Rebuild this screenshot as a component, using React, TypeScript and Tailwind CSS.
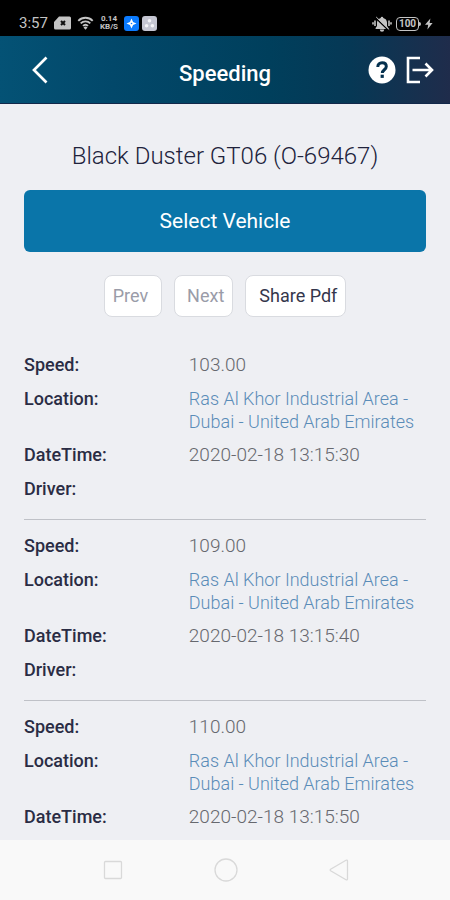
type SpeedingRecord = {
  speed: string;
  location: string;
  dateTime: string;
  driver?: string;
};

const records: SpeedingRecord[] = [
  {
    speed: "103.00",
    location: "Ras Al Khor Industrial Area - Dubai - United Arab Emirates",
    dateTime: "2020-02-18 13:15:30",
    driver: "",
  },
  {
    speed: "109.00",
    location: "Ras Al Khor Industrial Area - Dubai - United Arab Emirates",
    dateTime: "2020-02-18 13:15:40",
    driver: "",
  },
  {
    speed: "110.00",
    location: "Ras Al Khor Industrial Area - Dubai - United Arab Emirates",
    dateTime: "2020-02-18 13:15:50",
  },
];

function StatusBar() {
  return (
    <div className="flex h-9 shrink-0 items-end justify-between bg-black pr-[17px] pb-1 pl-[19px] text-[#c4c4c4]">
      <div className="flex items-center gap-1.5">
        <span className="text-[15px] leading-[18px]">3:57</span>

        <svg width="17" height="14" viewBox="0 0 17 14" aria-hidden="true">
          <path
            d="M5 0.5h10.5a1.5 1.5 0 0 1 1.5 1.5v10a1.5 1.5 0 0 1-1.5 1.5h-14A1.5 1.5 0 0 1 0 12V6z"
            fill="currentColor"
          />
          <path
            d="M7 5l4 4M11 5l-4 4"
            stroke="#111"
            strokeWidth="2"
          />
        </svg>

        <svg width="17" height="14" viewBox="0 0 16 14" fill="none" aria-hidden="true">
          <path
            d="M0.8 4.8a10.2 10.2 0 0 1 14.4 0M3.2 7.4a6.8 6.8 0 0 1 9.6 0M5.5 9.9a3.6 3.6 0 0 1 5 0"
            stroke="currentColor"
            strokeWidth="1.9"
          />
          <path d="M8 13.8l-2-2.4a2.8 2.8 0 0 1 4 0z" fill="currentColor" />
        </svg>

        <div className="flex flex-col items-center text-[8px] leading-2 font-bold">
          <span>0.14</span>
          <span>KB/S</span>
        </div>

        <div className="flex gap-[3px]">
          <svg width="15" height="15" viewBox="0 0 15 15" aria-hidden="true">
            <rect width="15" height="15" rx="3" fill="#0b7bff" />
            <path
              d="M7.5 2.5l1.6 3.4 3.4 1.6-3.4 1.6-1.6 3.4-1.6-3.4-3.4-1.6 3.4-1.6z"
              fill="#fff"
            />
            <circle cx="7.5" cy="7.5" r="0.8" fill="#0b7bff" />
          </svg>
          <svg width="15" height="15" viewBox="0 0 15 15" aria-hidden="true">
            <rect width="15" height="15" rx="3" fill="#c5c6d2" />
            <circle cx="7.5" cy="4.8" r="1.8" fill="#f4f4f8" />
            <circle cx="4.6" cy="9.8" r="1.8" fill="#f4f4f8" />
            <circle cx="10.4" cy="9.8" r="1.8" fill="#f4f4f8" />
          </svg>
        </div>
      </div>

      <div className="flex items-center gap-1">
        <svg width="20" height="16" viewBox="0 0 20 16" aria-hidden="true">
          <path
            d="M10 0.8a1.3 1.3 0 0 1 1.3 1.2A5 5 0 0 1 15 6.5V10l1.4 2v1H3.6v-1L5 10V6.5A5 5 0 0 1 8.7 2 1.3 1.3 0 0 1 10 0.8zM7.8 13.6h4.4a2.2 2.2 0 0 1-4.4 0z"
            fill="currentColor"
          />
          <path
            d="M3 4.6v5.4M1 6.2v2.4M17 4.6v5.4M19 6.2v2.4"
            stroke="currentColor"
            strokeWidth="1.6"
          />
          <path d="M3.4 1.8l13 12.4" stroke="#000" strokeWidth="1.3" />
          <path d="M4.2 1l13 12.6" stroke="currentColor" strokeWidth="1" />
        </svg>

        <div className="flex items-center">
          <span className="flex h-[14px] w-[23px] items-center justify-center rounded-[4px] border border-[#c4c4c4] text-[10px] leading-3 font-bold">
            100
          </span>
          <span className="h-1 w-0.5 rounded-r bg-[#c4c4c4]" />
        </div>

        <svg width="8" height="12" viewBox="0 0 8 12" aria-hidden="true">
          <path d="M5.4 0.5L0 6.8h3.2L2.4 11.5 7.6 5H4.6z" fill="currentColor" />
        </svg>
      </div>
    </div>
  );
}

function Header() {
  return (
    <header className="grid h-[68px] shrink-0 grid-cols-[1fr_auto_1fr] items-center border-b border-[#12284a] bg-[linear-gradient(to_right,#045275,#02486a_25%,#003f5c_60%,#063855_78%,#1f2c4b)] px-4 text-white">
      <button
        type="button"
        aria-label="Back"
        className="flex size-12 items-center justify-center"
      >
        <svg width="16" height="28" viewBox="0 0 16 28" fill="none">
          <path d="M14.5 1.5L2 14l12.5 12.5" stroke="currentColor" strokeWidth="2.7" />
        </svg>
      </button>

      <h1 className="pt-2 text-[22px] leading-7 font-medium">Speeding</h1>

      <div className="flex items-center justify-end gap-2.5">
        <button type="button" aria-label="Help">
          <svg width="28" height="28" viewBox="0 0 28 28" fill="none">
            <circle cx="14" cy="14" r="13.5" fill="currentColor" />
            <path
              d="M9.8 11c0-2.7 1.8-4.3 4.3-4.3s4.2 1.5 4.2 3.8c0 3.3-4 3.2-4 6.6"
              stroke="#04304e"
              strokeWidth="3"
            />
            <rect x="12.6" y="18.7" width="3.2" height="3.2" fill="#04304e" />
          </svg>
        </button>
        <button type="button" aria-label="Log out">
          <svg width="28" height="28" viewBox="0 0 28 28" fill="none">
            <path
              d="M14 2H2v24h12M6.5 14h19M19.5 7.5L26 14l-6.5 6.5"
              stroke="currentColor"
              strokeWidth="2.6"
            />
          </svg>
        </button>
      </div>
    </header>
  );
}

function RecordItem({ record }: { record: SpeedingRecord }) {
  const label = "w-[41%] shrink-0 text-lg leading-6 font-medium text-[#2a2c44]";
  const value = "min-w-0 flex-1 leading-[23px] font-light text-[#66686e]";

  return (
    <dl className="flex flex-col gap-2.5 border-b border-[#bfc1c7] pt-[14px] pb-[18px] text-[19px]">
      <div className="flex">
        <dt className={label}>Speed:</dt>
        <dd className={value}>{record.speed}</dd>
      </div>
      <div className="flex">
        <dt className={label}>Location:</dt>
        <dd className={value}>
          <a href="#map" className="block text-lg leading-[23px] text-[#5a8cb8]">
            {record.location}
          </a>
        </dd>
      </div>
      <div className="flex">
        <dt className={label}>DateTime:</dt>
        <dd className={value}>{record.dateTime}</dd>
      </div>
      {record.driver !== undefined && (
        <div className="flex">
          <dt className={label}>Driver:</dt>
          <dd className={value}>{record.driver}</dd>
        </div>
      )}
    </dl>
  );
}

function NavigationBar() {
  return (
    <nav className="flex h-[60px] shrink-0 items-center justify-center gap-[89px] bg-[#f9f9f9] pl-px text-[#d9d9d9]">
      <button type="button" aria-label="Recent apps">
        <svg width="24" height="24" viewBox="0 0 24 24" fill="none" stroke="currentColor">
          <rect x="3.5" y="3.5" width="17" height="17" rx="1" strokeWidth="1.3" />
        </svg>
      </button>
      <button type="button" aria-label="Home">
        <svg width="24" height="24" viewBox="0 0 24 24" fill="none" stroke="currentColor">
          <circle cx="12" cy="12" r="11" strokeWidth="1.3" />
        </svg>
      </button>
      <button type="button" aria-label="Back">
        <svg width="24" height="24" viewBox="0 0 24 24" fill="none" stroke="currentColor">
          <path
            d="M20.5 3v18a1 1 0 0 1-1.5 0.8L3.6 12.8a1 1 0 0 1 0-1.6L19 2.2a1 1 0 0 1 1.5 0.8z"
            strokeWidth="1.3"
          />
        </svg>
      </button>
    </nav>
  );
}

export default function App() {
  return (
    <div className="flex h-screen flex-col bg-[#eeeff3] font-[Roboto,sans-serif]">
      <StatusBar />
      <Header />

      <main className="min-h-0 flex-1 overflow-y-auto px-6 pt-9 [scrollbar-width:none]">
        <h2 className="text-center text-2xl font-light text-[#20223b]">
          Black Duster GT06 (O-69467)
        </h2>

        <button
          type="button"
          className="mt-[18px] h-[62px] w-full rounded-md bg-[#0a75a9] pt-0.5 text-[21px] text-white"
        >
          Select Vehicle
        </button>

        <div className="mt-[23px] flex justify-center gap-3 text-lg">
          <button
            type="button"
            disabled
            className="h-[42px] rounded-lg border border-[#d9dbe0] bg-white pr-[13px] pl-2 text-[#9a9ca8]"
          >
            Prev
          </button>
          <button
            type="button"
            disabled
            className="h-[42px] rounded-lg border border-[#d9dbe0] bg-white pr-2 pl-3 text-[#9a9ca8]"
          >
            Next
          </button>
          <button
            type="button"
            className="h-[42px] rounded-lg border border-[#d9dbe0] bg-white pr-2 pl-[13px] text-[#34364c]"
          >
            Share Pdf
          </button>
        </div>

        <div className="mt-[22px]">
          {records.map((record) => (
            <RecordItem key={record.dateTime} record={record} />
          ))}
        </div>
      </main>

      <NavigationBar />
    </div>
  );
}
